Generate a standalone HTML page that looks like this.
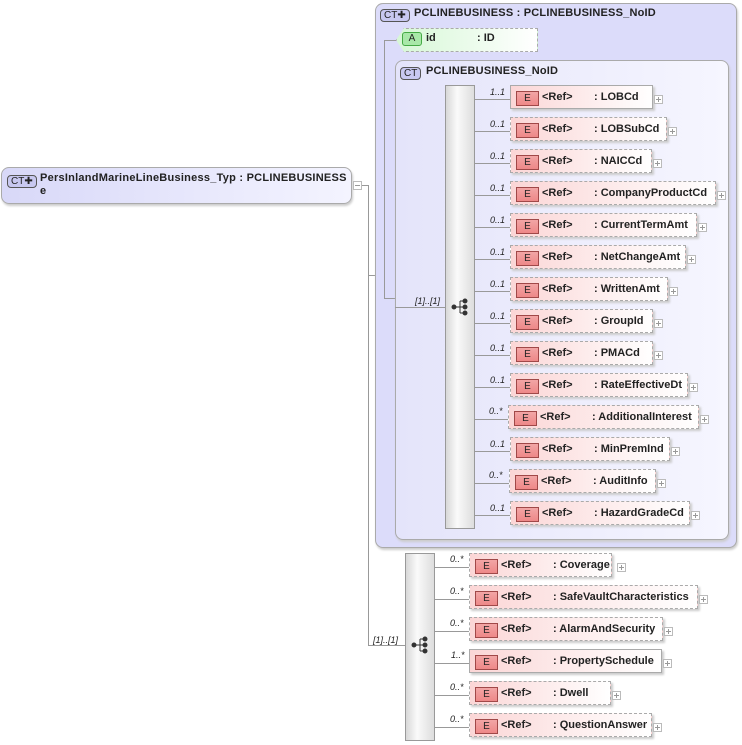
<!DOCTYPE html>
<html><head><meta charset="utf-8">
<style>
*{margin:0;padding:0;box-sizing:border-box}
body{width:742px;height:745px;background:#fff;position:relative;overflow:hidden;font-family:"Liberation Sans",sans-serif;font-size:11px;font-weight:bold;color:#222}
.a{position:absolute}
.ln{position:absolute;background:#999}
.el{position:absolute;height:24px;background:linear-gradient(90deg,#fbd6d6,#fff 100%);border:1px dashed #aaa;box-shadow:2px 2px 2px #ccc}
.el.s{border-style:solid}
.eb{position:absolute;left:5px;top:5px;width:23px;height:15px;border:1px solid #a04848;background:linear-gradient(#f2a5a5,#e88);font-size:10px;font-weight:normal;text-align:center;line-height:13px;color:#222}
.rf{position:absolute;left:31px;top:5px}
.nm{position:absolute;left:83px;top:5px}
.pl{position:absolute;width:9px;height:9px;border:1px solid #bbb;background:#fff}
.pl:before{content:"";position:absolute;left:1px;top:3px;width:5px;height:1px;background:#999}
.pl:after{content:"";position:absolute;left:3px;top:1px;width:1px;height:5px;background:#999}
.cd{position:absolute;font-size:9px;font-style:italic;font-weight:normal;color:#222}
.bar{position:absolute;background:linear-gradient(90deg,#d8d8d8,#fafafa 40%,#ddd);border:1px solid #999}
.ct{position:absolute;border:1px solid #555;border-radius:4px;background:#c8c8f0;font-size:10px;font-weight:normal;line-height:11px;padding:0 3px;color:#222}
</style></head><body>

<div class="a" style="left:1px;top:167px;width:351px;height:37px;border:1px solid #aaa;border-radius:8px;background:linear-gradient(90deg,#d8d8f8,#f4f4ff);box-shadow:1px 2px 2px #ccc"></div>
<div class="ct" style="left:7px;top:175px">CT✚</div>
<div class="a" style="left:40px;top:172px;letter-spacing:0.25px">PersInlandMarineLineBusiness_Typ : PCLINEBUSINESS</div>
<div class="a" style="left:40px;top:185px">e</div>
<div class="a" style="left:353px;top:181px;width:9px;height:9px;border:1px solid #bbb;background:#fff"><div style="position:absolute;left:1px;top:3px;width:5px;height:1px;background:#999"></div></div>
<div class="ln" style="left:362px;top:185px;width:6px;height:1px"></div>
<div class="ln" style="left:368px;top:185px;width:1px;height:461px"></div>
<div class="ln" style="left:368px;top:275px;width:7px;height:1px"></div>
<div class="ln" style="left:368px;top:645px;width:37px;height:1px"></div>
<div class="cd" style="left:373px;top:635px">[1]..[1]</div>

<div class="a" style="left:375px;top:3px;width:362px;height:545px;border:1px solid #aaa;border-radius:8px;background:#dcdcfa;box-shadow:1px 2px 2px #ccc"></div>
<div class="ct" style="left:380px;top:9px">CT✚</div>
<div class="a" style="left:414px;top:7px;letter-spacing:0.2px">PCLINEBUSINESS : PCLINEBUSINESS_NoID</div>
<div class="ln" style="left:384px;top:40px;width:1px;height:259px"></div>
<div class="ln" style="left:384px;top:40px;width:12px;height:1px"></div>
<div class="ln" style="left:384px;top:298px;width:11px;height:1px"></div>
<div class="a" style="left:396px;top:28px;width:142px;height:24px;border:1px dashed #aaa;background:linear-gradient(90deg,#d6f7d6,#fff);clip-path:polygon(8px 0,100% 0,100% 100%,8px 100%,0 50%);"></div>
<div class="a" style="left:402px;top:32px;width:20px;height:14px;border:1px solid #4a4;border-radius:3px;background:#a8e8a8;font-size:10px;font-weight:normal;text-align:center;line-height:12px">A</div>
<div class="a" style="left:426px;top:32px">id</div>
<div class="a" style="left:477px;top:32px">: ID</div>

<div class="a" style="left:395px;top:60px;width:334px;height:480px;border:1px solid #aaa;border-radius:8px;background:linear-gradient(90deg,#e4e4fa,#f6f6ff);box-shadow:1px 2px 2px #ccc"></div>
<div class="ct" style="left:400px;top:67px">CT</div>
<div class="a" style="left:426px;top:65px;letter-spacing:0.2px">PCLINEBUSINESS_NoID</div>
<div class="ln" style="left:395px;top:307px;width:50px;height:1px"></div>
<div class="cd" style="left:415px;top:296px">[1]..[1]</div>
<div class="bar" style="left:445px;top:85px;width:30px;height:444px"></div>
<svg class="a" style="left:451px;top:298px" width="18" height="18"><g fill="#333" stroke="#333"><circle cx="3" cy="9" r="2"/><line x1="3" y1="9" x2="9" y2="9"/><line x1="9" y1="3" x2="9" y2="15"/><line x1="9" y1="3" x2="14" y2="3"/><line x1="9" y1="9" x2="14" y2="9"/><line x1="9" y1="15" x2="14" y2="15"/><circle cx="14" cy="3" r="2"/><circle cx="14" cy="9" r="2"/><circle cx="14" cy="15" r="2"/></g></svg>

<div class="ln" style="left:475px;top:99px;width:35px;height:1px"></div><div class="cd" style="left:490px;top:87px">1..1</div>
<div class="el s" style="left:510px;top:85px;width:143px"><div class="eb">E</div><div class="rf">&lt;Ref&gt;</div><div class="nm">: LOBCd</div></div><div class="pl" style="left:654px;top:95px"></div>

<div class="ln" style="left:475px;top:131px;width:35px;height:1px"></div><div class="cd" style="left:490px;top:119px">0..1</div>
<div class="el" style="left:510px;top:117px;width:157px"><div class="eb">E</div><div class="rf">&lt;Ref&gt;</div><div class="nm">: LOBSubCd</div></div><div class="pl" style="left:668px;top:127px"></div>

<div class="ln" style="left:475px;top:163px;width:35px;height:1px"></div><div class="cd" style="left:490px;top:151px">0..1</div>
<div class="el" style="left:510px;top:149px;width:142px"><div class="eb">E</div><div class="rf">&lt;Ref&gt;</div><div class="nm">: NAICCd</div></div><div class="pl" style="left:653px;top:159px"></div>

<div class="ln" style="left:475px;top:195px;width:35px;height:1px"></div><div class="cd" style="left:490px;top:183px">0..1</div>
<div class="el" style="left:510px;top:181px;width:206px"><div class="eb">E</div><div class="rf">&lt;Ref&gt;</div><div class="nm">: CompanyProductCd</div></div><div class="pl" style="left:717px;top:191px"></div>

<div class="ln" style="left:475px;top:227px;width:35px;height:1px"></div><div class="cd" style="left:490px;top:215px">0..1</div>
<div class="el" style="left:510px;top:213px;width:187px"><div class="eb">E</div><div class="rf">&lt;Ref&gt;</div><div class="nm">: CurrentTermAmt</div></div><div class="pl" style="left:698px;top:223px"></div>

<div class="ln" style="left:475px;top:259px;width:35px;height:1px"></div><div class="cd" style="left:490px;top:247px">0..1</div>
<div class="el" style="left:510px;top:245px;width:176px"><div class="eb">E</div><div class="rf">&lt;Ref&gt;</div><div class="nm">: NetChangeAmt</div></div><div class="pl" style="left:687px;top:255px"></div>

<div class="ln" style="left:475px;top:291px;width:35px;height:1px"></div><div class="cd" style="left:490px;top:279px">0..1</div>
<div class="el" style="left:510px;top:277px;width:158px"><div class="eb">E</div><div class="rf">&lt;Ref&gt;</div><div class="nm">: WrittenAmt</div></div><div class="pl" style="left:669px;top:287px"></div>

<div class="ln" style="left:475px;top:323px;width:35px;height:1px"></div><div class="cd" style="left:490px;top:311px">0..1</div>
<div class="el" style="left:510px;top:309px;width:143px"><div class="eb">E</div><div class="rf">&lt;Ref&gt;</div><div class="nm">: GroupId</div></div><div class="pl" style="left:654px;top:319px"></div>

<div class="ln" style="left:475px;top:355px;width:35px;height:1px"></div><div class="cd" style="left:490px;top:343px">0..1</div>
<div class="el" style="left:510px;top:341px;width:143px"><div class="eb">E</div><div class="rf">&lt;Ref&gt;</div><div class="nm">: PMACd</div></div><div class="pl" style="left:654px;top:351px"></div>

<div class="ln" style="left:475px;top:387px;width:35px;height:1px"></div><div class="cd" style="left:490px;top:375px">0..1</div>
<div class="el" style="left:510px;top:373px;width:178px"><div class="eb">E</div><div class="rf">&lt;Ref&gt;</div><div class="nm">: RateEffectiveDt</div></div><div class="pl" style="left:689px;top:383px"></div>

<div class="ln" style="left:475px;top:419px;width:33px;height:1px"></div><div class="cd" style="left:489px;top:406px">0..*</div>
<div class="el" style="left:508px;top:405px;width:191px"><div class="eb">E</div><div class="rf">&lt;Ref&gt;</div><div class="nm">: AdditionalInterest</div></div><div class="pl" style="left:700px;top:415px"></div>

<div class="ln" style="left:475px;top:451px;width:35px;height:1px"></div><div class="cd" style="left:490px;top:439px">0..1</div>
<div class="el" style="left:510px;top:437px;width:160px"><div class="eb">E</div><div class="rf">&lt;Ref&gt;</div><div class="nm">: MinPremInd</div></div><div class="pl" style="left:671px;top:447px"></div>

<div class="ln" style="left:475px;top:483px;width:34px;height:1px"></div><div class="cd" style="left:489px;top:470px">0..*</div>
<div class="el" style="left:509px;top:469px;width:147px"><div class="eb">E</div><div class="rf">&lt;Ref&gt;</div><div class="nm">: AuditInfo</div></div><div class="pl" style="left:657px;top:479px"></div>

<div class="ln" style="left:475px;top:515px;width:35px;height:1px"></div><div class="cd" style="left:490px;top:503px">0..1</div>
<div class="el" style="left:510px;top:501px;width:180px"><div class="eb">E</div><div class="rf">&lt;Ref&gt;</div><div class="nm">: HazardGradeCd</div></div><div class="pl" style="left:691px;top:511px"></div>

<div class="bar" style="left:405px;top:553px;width:30px;height:188px"></div>
<svg class="a" style="left:411px;top:636px" width="18" height="18"><g fill="#333" stroke="#333"><circle cx="3" cy="9" r="2"/><line x1="3" y1="9" x2="9" y2="9"/><line x1="9" y1="3" x2="9" y2="15"/><line x1="9" y1="3" x2="14" y2="3"/><line x1="9" y1="9" x2="14" y2="9"/><line x1="9" y1="15" x2="14" y2="15"/><circle cx="14" cy="3" r="2"/><circle cx="14" cy="9" r="2"/><circle cx="14" cy="15" r="2"/></g></svg>

<div class="ln" style="left:435px;top:567px;width:34px;height:1px"></div><div class="cd" style="left:450px;top:554px">0..*</div>
<div class="el" style="left:469px;top:553px;width:143px"><div class="eb">E</div><div class="rf">&lt;Ref&gt;</div><div class="nm">: Coverage</div></div><div class="pl" style="left:617px;top:563px"></div>

<div class="ln" style="left:435px;top:599px;width:34px;height:1px"></div><div class="cd" style="left:450px;top:586px">0..*</div>
<div class="el" style="left:469px;top:585px;width:229px"><div class="eb">E</div><div class="rf">&lt;Ref&gt;</div><div class="nm">: SafeVaultCharacteristics</div></div><div class="pl" style="left:699px;top:595px"></div>

<div class="ln" style="left:435px;top:631px;width:34px;height:1px"></div><div class="cd" style="left:450px;top:618px">0..*</div>
<div class="el" style="left:469px;top:617px;width:194px"><div class="eb">E</div><div class="rf">&lt;Ref&gt;</div><div class="nm">: AlarmAndSecurity</div></div><div class="pl" style="left:664px;top:627px"></div>

<div class="ln" style="left:435px;top:663px;width:34px;height:1px"></div><div class="cd" style="left:451px;top:650px">1..*</div>
<div class="el s" style="left:469px;top:649px;width:193px"><div class="eb">E</div><div class="rf">&lt;Ref&gt;</div><div class="nm">: PropertySchedule</div></div><div class="pl" style="left:663px;top:659px"></div>

<div class="ln" style="left:435px;top:695px;width:34px;height:1px"></div><div class="cd" style="left:450px;top:682px">0..*</div>
<div class="el" style="left:469px;top:681px;width:142px"><div class="eb">E</div><div class="rf">&lt;Ref&gt;</div><div class="nm">: Dwell</div></div><div class="pl" style="left:612px;top:691px"></div>

<div class="ln" style="left:435px;top:727px;width:34px;height:1px"></div><div class="cd" style="left:450px;top:714px">0..*</div>
<div class="el" style="left:469px;top:713px;width:183px"><div class="eb">E</div><div class="rf">&lt;Ref&gt;</div><div class="nm">: QuestionAnswer</div></div><div class="pl" style="left:653px;top:723px"></div>

</body></html>
